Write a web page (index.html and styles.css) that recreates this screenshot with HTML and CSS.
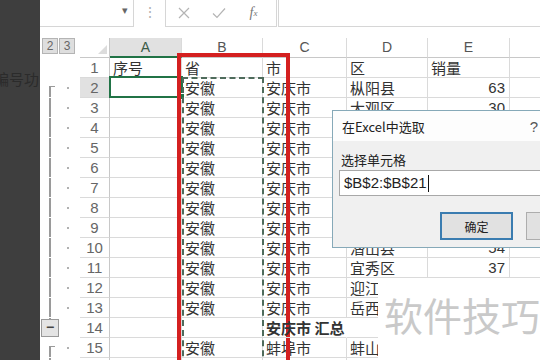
FILE: index.html
```html
<!DOCTYPE html>
<html lang="zh-CN">
<head>
  <meta charset="UTF-8">
  <title>在Excel中选取</title>
  <link rel="stylesheet" href="styles.css">
</head>

<body>
  <div class="app">
    <!-- dark task pane edge -->
    <div class="side">
      <span class="side-text">编号功</span>
    </div>

    <div class="main">
      <!-- Formula bar -->
      <div class="toolbar">
        <div class="namebox"><span class="caret">&#9662;</span></div>
        <div class="sep">&#8942;</div>
        <div class="fxbox">
          <span class="tool">
            <svg width="12" height="12" viewBox="0 0 12 12"><path d="M1 1 L11 11 M11 1 L1 11" stroke="#b4b4b4" stroke-width="1.2" fill="none"/></svg>
          </span>
          <span class="tool">
            <svg width="14" height="12" viewBox="0 0 14 12"><path d="M1 6.5 L5 10.5 L13 1.5" stroke="#b4b4b4" stroke-width="1.2" fill="none"/></svg>
          </span>
          <span class="tool fx">f<sub>x</sub></span>
        </div>
        <div class="formula"></div>
      </div>

      <!-- Sheet -->
      <div class="sheet-wrap">
        <div class="sheet" id="sheet"></div>

        <div class="sel-box"><span class="handle"></span></div>
        <div class="ants"></div>
        <div class="red-box"></div>

        <!-- Dialog -->
        <div class="dialog">
          <div class="dlg-title">
            <span>在Excel中选取</span>
            <span class="help">?</span>
          </div>
          <div class="dlg-body">
            <div class="dlg-label">选择单元格</div>
            <div class="dlg-input">$B$2:$B$21<span class="cursor"></span></div>
            <div class="dlg-btns">
              <button class="btn primary">确定</button>
              <button class="btn">取消</button>
            </div>
          </div>
        </div>

        <div class="watermark">软件技巧</div>
      </div>
    </div>
  </div>

  <script>
    const rows = [
      ["序号", "省", "市", "区", "销量"],
      ["", "安徽", "安庆市", "枞阳县", "63"],
      ["", "安徽", "安庆市", "大观区", "30"],
      ["", "安徽", "安庆市", "大观区", "41"],
      ["", "安徽", "安庆市", "怀宁县", "25"],
      ["", "安徽", "安庆市", "怀宁县", "58"],
      ["", "安徽", "安庆市", "太湖县", "47"],
      ["", "安徽", "安庆市", "太湖县", "22"],
      ["", "安徽", "安庆市", "桐城市", "39"],
      ["", "安徽", "安庆市", "潜山县", "54"],
      ["", "安徽", "安庆市", "宜秀区", "37"],
      ["", "安徽", "安庆市", "迎江", ""],
      ["", "安徽", "安庆市", "岳西", ""],
      ["", "", "安庆市 汇总", "", ""],
      ["", "安徽", "蚌埠市", "蚌山", ""],
      ["", "安徽", "蚌埠市", "蚌山", ""]
    ];
    const sheet = document.getElementById("sheet");

    function cell(cls, text) {
      const div = document.createElement("div");
      div.className = cls;
      if (text) div.textContent = text;
      sheet.appendChild(div);
      return div;
    }

    // header row
    const groups = cell("ol head");
    groups.innerHTML = '<span class="lvl">2</span><span class="lvl">3</span>';
    cell("corner");
    ["A", "B", "C", "D", "E", ""].forEach(function (letter, i) {
      cell(i === 0 ? "colhead active" : "colhead", letter);
    });

    rows.forEach(function (row, i) {
      const n = i + 1;

      // outline gutter
      let ol = "ol";
      if (n === 2 || n === 15 || n === 16) ol += " line";
      if (n === 2 || n === 15) ol += " top";
      if (n > 2 && n < 14) ol += " line";
      const gutter = cell(ol);
      if (n === 14) {
        gutter.classList.add("line-up");
        gutter.innerHTML = '<span class="collapse">&minus;</span>';
      } else if (n > 1) {
        gutter.innerHTML = '<span class="dot"></span>';
      }

      cell(n === 2 ? "rowhead active" : "rowhead", String(n));
      row.forEach(function (val, c) {
        let cls = "cell";
        if (c === 4 && n > 1) cls += " num";
        if (n === 14 && c === 2) cls += " bold";
        cell(cls, val);
      });
      cell("cell");
    });
  </script>
</body>
</html>
```

FILE: styles.css
```css
body {
  margin: 0;
  width: 540px;
  height: 360px;
  overflow: hidden;
  background-color: white;
  font-family: "Liberation Sans", "Noto Sans CJK SC", sans-serif;
  color: #333;
}
.app {
  display: flex;
  height: 360px;
}
.side {
  width: 40px;
  flex-shrink: 0;
  background-color: #3e3e3e;
  overflow: hidden;
  position: relative;
}
.side-text {
  display: block;
  margin-top: 68px;
  margin-left: -6px;
  white-space: nowrap;
  font-family: "Noto Sans CJK SC", sans-serif;
  font-size: 15px;
  color: #2b2b2b;
}
.main {
  flex: 1;
  overflow: hidden;
}

/* formula bar */
.toolbar {
  display: flex;
  height: 27px;
  margin-bottom: 11px;
}
.namebox {
  width: 88px;
  border-right: 1px solid #d6d6d6;
  border-bottom: 1px solid #d6d6d6;
  display: flex;
  justify-content: flex-end;
  align-items: flex-start;
  padding-right: 5px;
}
.caret {
  font-size: 11px;
  color: #666;
  margin-top: 4px;
}
.sep {
  width: 31px;
  text-align: center;
  color: #b0b0b0;
  font-size: 14px;
  line-height: 24px;
}
.fxbox {
  width: 110px;
  border-left: 1px solid #d6d6d6;
  border-right: 1px solid #d6d6d6;
  border-bottom: 1px solid #d6d6d6;
  display: flex;
  align-items: center;
}
.tool {
  width: 35px;
  display: flex;
  justify-content: center;
  align-items: center;
}
.fx {
  font-family: "Liberation Serif", serif;
  font-style: italic;
  font-size: 14px;
  color: #777;
}
.fx sub {
  font-size: 9px;
}
.formula {
  flex: 1;
  margin-left: 1px;
  border-left: 1px solid #d6d6d6;
  border-bottom: 1px solid #d6d6d6;
}

/* grid */
.sheet-wrap {
  position: relative;
}
.sheet {
  display: grid;
  grid-template-columns: 40px 30px 72px 81px 84px 81px 82px 60px;
  grid-auto-rows: 20px;
}
.sheet > div {
  box-sizing: border-box;
}
.ol {
  position: relative;
  border-bottom: 1px solid transparent;
}
.ol.head {
  display: flex;
  align-items: flex-start;
  padding-left: 2px;
}
.lvl {
  width: 16px;
  height: 16px;
  margin-right: 1px;
  box-sizing: border-box;
  border: 1px solid #b4b4b4;
  background-color: #dedede;
  color: #666;
  font-size: 12px;
  text-align: center;
  line-height: 14px;
}
.ol.line::before {
  content: "";
  position: absolute;
  left: 9px;
  top: 0;
  bottom: 0;
  border-left: 2px solid #9a9a9a;
}
.ol.top::before {
  top: 8px;
  width: 4px;
  border-top: 1px solid #9a9a9a;
}
.ol.line-up::before {
  content: "";
  position: absolute;
  left: 9px;
  top: 0;
  height: 2px;
  border-left: 2px solid #9a9a9a;
}
.dot {
  position: absolute;
  left: 27px;
  top: 9px;
  width: 2px;
  height: 2px;
  background-color: #b0b0b0;
}
.collapse {
  position: absolute;
  left: 1px;
  top: 1px;
  width: 18px;
  height: 18px;
  box-sizing: border-box;
  border: 1px solid #999;
  background-color: #e4e4e4;
  color: #444;
  font-size: 14px;
  font-weight: bold;
  line-height: 15px;
  text-align: center;
}
.corner {
  border-right: 1px solid #c8c8c8;
  border-bottom: 1px solid #c8c8c8;
  position: relative;
}
.corner::after {
  content: "";
  position: absolute;
  right: 2px;
  bottom: 3px;
  border-left: 9px solid transparent;
  border-bottom: 9px solid #dcdcdc;
}
.colhead {
  border-right: 1px solid #dadada;
  border-bottom: 1px solid #c8c8c8;
  text-align: center;
  font-size: 14px;
  line-height: 19px;
  color: #555;
}
.colhead.active {
  background-color: #e1e1e1;
  border-bottom: 2px solid #217346;
  color: #3b5a47;
}
.rowhead {
  border-right: 1px solid #c8c8c8;
  border-bottom: 1px solid #dadada;
  text-align: center;
  font-size: 15px;
  line-height: 20px;
  color: #666;
}
.rowhead.active {
  background-color: #e1e1e1;
}
.cell {
  border-right: 1px solid #dadada;
  border-bottom: 1px solid #dadada;
  padding-left: 3px;
  font-family: "Noto Sans CJK SC", sans-serif;
  font-size: 15px;
  line-height: 19px;
  white-space: nowrap;
  color: #333;
}
.cell.num {
  text-align: right;
  padding-right: 4px;
  font-family: "Liberation Sans", sans-serif;
}
.cell.bold {
  font-weight: bold;
  overflow: visible;
  position: relative;
  z-index: 1;
  border-right-color: transparent;
}

/* overlays */
.sel-box {
  position: absolute;
  left: 69px;
  top: 38px;
  width: 74px;
  height: 22px;
  box-sizing: border-box;
  border: 2px solid #217346;
}
.handle {
  position: absolute;
  right: -4px;
  bottom: -4px;
  width: 5px;
  height: 5px;
  background-color: #217346;
  border: 1px solid white;
}
.ants {
  position: absolute;
  left: 142px;
  top: 39px;
  width: 82px;
  height: 340px;
  box-sizing: border-box;
  border: 2px dashed #4e6b5b;
}
.red-box {
  position: absolute;
  left: 137px;
  top: 15px;
  width: 113px;
  height: 400px;
  box-sizing: border-box;
  border: 4px solid #d42020;
}
.dialog {
  position: absolute;
  left: 292px;
  top: 72px;
  width: 270px;
  height: 138px;
  box-sizing: border-box;
  border: 1px solid #86a9b8;
  background-color: #f0f0f0;
  z-index: 2;
  font-family: "Noto Sans CJK SC", sans-serif;
}
.dlg-title {
  height: 30px;
  background-color: #fdfdfd;
  display: flex;
  justify-content: space-between;
  align-items: center;
  padding: 0 63px 0 9px;
  font-size: 13px;
  color: #222;
}
.help {
  font-family: "Liberation Sans", sans-serif;
  font-size: 15px;
  color: #555;
}
.dlg-body {
  padding: 10px 0 0 6px;
}
.dlg-label {
  font-size: 13px;
  line-height: 18px;
  margin-left: 2px;
  margin-bottom: 1px;
  color: #222;
}
.dlg-input {
  height: 26px;
  box-sizing: border-box;
  border: 1px solid #a8a8a8;
  background-color: white;
  padding-left: 4px;
  font-family: "Liberation Sans", sans-serif;
  font-size: 15px;
  line-height: 24px;
  color: #222;
  display: flex;
  align-items: center;
}
.cursor {
  width: 1px;
  height: 17px;
  margin-left: 1px;
  background-color: #111;
}
.dlg-btns {
  display: flex;
  gap: 13px;
  margin-top: 16px;
  margin-left: 101px;
}
.btn {
  flex-shrink: 0;
  width: 73px;
  height: 28px;
  border: 1px solid #adadad;
  background-color: #e1e1e1;
  font-family: "Noto Sans CJK SC", sans-serif;
  font-size: 12px;
  color: #222;
  padding: 0;
}
.btn.primary {
  border: 2px solid #3a7cb0;
}
.watermark {
  position: absolute;
  left: 338px;
  top: 240px;
  width: 170px;
  height: 90px;
  background-color: white;
  padding: 6px 0 0 6px;
  font-family: "Noto Sans CJK SC", sans-serif;
  font-size: 39px;
  line-height: 60px;
  color: #c9c9c9;
  white-space: nowrap;
  z-index: 1;
}
```
